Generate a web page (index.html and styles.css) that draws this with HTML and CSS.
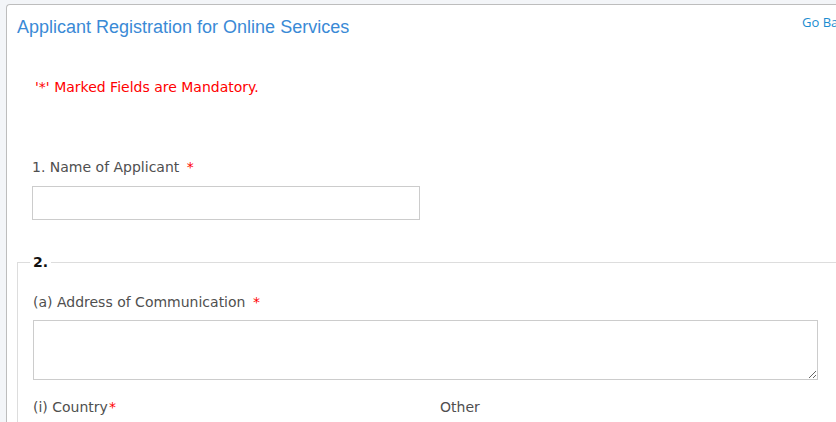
FILE: index.html
```html
<!DOCTYPE html>
<html>
<head>
<meta charset="utf-8">
<link rel="stylesheet" href="styles.css">
</head>
<body>
<div class="card">
  <div class="head">
    <h1 class="title">Applicant Registration for Online Services</h1>
    <a class="back" href="#">Go Back</a>
  </div>
  <p class="mandatory">'*' Marked Fields are Mandatory.</p>
  <div class="field first">
    <label class="lbl">1. Name of Applicant <span class="req">*</span></label>
    <input class="txt" type="text">
  </div>
  <fieldset class="group">
    <legend class="legend">2.</legend>
    <label class="lbl">(a) Address of Communication <span class="req">*</span></label>
    <textarea class="area"></textarea>
    <div class="row">
      <span class="lbl col">(i) Country<span class="req tight">*</span></span>
      <span class="lbl col">Other</span>
    </div>
  </fieldset>
</div>
</body>
</html>
```
FILE: styles.css
```css
html, body {
  margin: 0;
  padding: 0;
  background: #f3f5f8;
  overflow: hidden;
  height: 422px;
}
.card {
  margin: 4px 0 0 6px;
  width: 1000px;
  height: 600px;
  background: #fff;
  border: 1px solid #bdbdbd;
  border-right: none;
  border-top-left-radius: 4px;
  box-sizing: border-box;
}
.head {
  display: grid;
  grid-template-columns: 795px 60px;
  align-items: start;
}
.title {
  margin: 11px 0 0 10px;
  font-family: "Liberation Sans", Arial, sans-serif;
  font-weight: normal;
  font-size: 18px;
  color: #3a8ad6;
  line-height: 22px;
}
.back {
  margin-top: 8px;
  font-family: "Open Sans", sans-serif;
  font-size: 13px;
  color: #1a8cd0;
  text-decoration: none;
  white-space: nowrap;
}
.mandatory {
  margin: 40px 0 0 28px;
  font-family: "DejaVu Sans", sans-serif;
  font-size: 14px;
  line-height: 18px;
  color: #f00;
}
.field.first {
  margin: 62px 0 0 25px;
  display: flex;
  flex-direction: column;
}
.lbl {
  font-family: "DejaVu Sans", sans-serif;
  font-size: 14px;
  line-height: 18px;
  color: #4f4f4f;
}
.req {
  color: #f00;
  padding-left: 3px;
}
.req.tight {
  padding-left: 1px;
}
.txt {
  margin-top: 10px;
  width: 388px;
  height: 34px;
  box-sizing: border-box;
  border: 1px solid #ccc;
  padding: 0;
}
.group {
  margin: 34px 0 0 10px;
  padding: 0 0 60px 15px;
  border: 1px solid #ddd;
  border-right: none;
  width: 900px;
}
.legend {
  margin-left: -3px;
  padding: 0 3px;
  font-family: "DejaVu Sans", sans-serif;
  font-weight: bold;
  font-size: 14px;
  color: #111;
}
.group > .lbl {
  display: block;
  margin-top: 23px;
}
.area {
  display: block;
  margin-top: 9px;
  width: 785px;
  height: 60px;
  box-sizing: border-box;
  border: 1px solid #ccc;
  resize: both;
}
.row {
  display: grid;
  grid-template-columns: 407px 1fr;
  margin-top: 18px;
}
```
